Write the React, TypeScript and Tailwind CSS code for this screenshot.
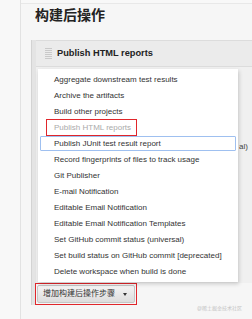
import React from "react"

const items = [
    "Aggregate downstream test results",
    "Archive the artifacts",
    "Build other projects",
    "Publish HTML reports",
    "Publish JUnit test result report",
    "Record fingerprints of files to track usage",
    "Git Publisher",
    "E-mail Notification",
    "Editable Email Notification",
    "Editable Email Notification Templates",
    "Set GitHub commit status (universal)",
    "Set build status on GitHub commit [deprecated]",
    "Delete workspace when build is done",
]

const Grip = () => (
    <svg width="7" height="12" viewBox="0 0 7 12">
        {[0, 2, 4, 6, 8, 10].map((y) => (
            <rect key={y} x="0" y={y} width="7" height="1" fill="#c9c9c9" />
        ))}
    </svg>
)

const App = () => {
    return (
        <div
            className="relative w-[252px] h-[319px] overflow-hidden flex bg-[#f8f8f8] text-[#333]"
            style={{ fontFamily: '"Liberation Sans", "Noto Sans CJK SC", sans-serif' }}
        >
            <div className="w-[21px] shrink-0 border-r border-[#e2e2e2]" />

            <div className="flex-1 mt-[3px] border-t border-[#e8e8e8] bg-[#f6f6f6] pl-[10px] flex flex-col">
                <h2 className="mt-[3px] ml-[4px] text-[14px] leading-[16px] font-bold text-[#222]">构建后操作</h2>

                <div className="mt-[17px] flex">
                    <div className="w-[5px] shrink-0 border-l border-[#d3d3d3] bg-[#e4e4e4]" />
                    <div className="flex-1 flex flex-col">
                        <div className="h-[27px] flex items-center pl-[9px] gap-[5px] bg-[#ebebeb] border-t border-b border-[#dcdcdc]">
                            <Grip />
                            <span className="text-[9.25px] font-bold text-[#222]">Publish HTML reports</span>
                        </div>
                        <div className="h-[216px] bg-[#f0f0f0] flex justify-end pt-[75px] pr-[4px]">
                            <span className="text-[8px] leading-[10px] text-[#444]">al)</span>
                        </div>
                        <div className="w-fit -ml-px border-[1.5px] border-[#e0262b] p-px">
                            <button className="h-[18px] flex items-center gap-[8px] pl-[5px] pr-[7px] border border-[#c6c6c6] rounded-[2px] bg-gradient-to-b from-[#f4f4f4] to-[#dddddd] text-[8px] text-[#333]">
                                <span>增加构建后操作步骤</span>
                                <span className="w-0 h-0 border-l-[2.5px] border-r-[2.5px] border-t-[3px] border-l-transparent border-r-transparent border-t-[#333]" />
                            </button>
                        </div>
                    </div>
                </div>
            </div>

            <div className="absolute left-[38px] top-[69px] w-[200px] h-[213px] bg-white shadow-[1px_2px_4px_rgba(0,0,0,0.18)] pt-[3px]">
                {items.map((item, i) => (
                    <div key={item} className="relative h-[16px] flex items-center pl-[16px] text-[8px] whitespace-nowrap">
                        {i === 3 && (
                            <div className="absolute left-[8px] top-[-1px] w-[91px] h-[17px] border-[1.5px] border-[#e0262b]" />
                        )}
                        {i === 4 && (
                            <div className="absolute left-[2px] right-[2px] top-[0px] h-[15px] border border-[#9fc0f0] rounded-[1px]" />
                        )}
                        <span className={i === 3 ? "text-[#aaaaaa]" : "text-[#333]"}>{item}</span>
                    </div>
                ))}
            </div>

            <div className="absolute left-[197px] top-[305px] text-[5px] leading-[6px] text-[#c4c4c4]">@稀土掘金技术社区</div>
        </div>
    )
}

export default App
